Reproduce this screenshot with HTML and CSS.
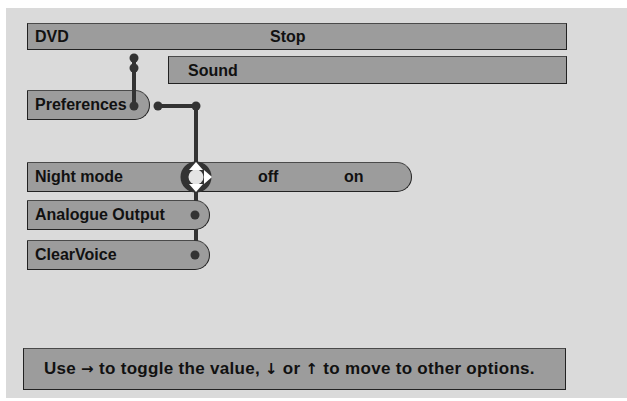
FILE: index.html
```html
<!DOCTYPE html>
<html>
<head>
<meta charset="utf-8">
<title>Preferences - Sound</title>
<link rel="stylesheet" href="styles.css">
</head>
<body>
<div id="osd">
	<div class="bar bar-top">
		<span class="label-dvd">DVD</span>
		<span>Stop</span>
	</div>
	<div class="bar bar-sound">Sound</div>
	<div class="bar bar-round bar-prefs">Preferences</div>

	<div class="bar bar-round bar-night">
		<span class="label-night">Night mode</span>
		<span class="opt-off">off</span>
		<span>on</span>
	</div>
	<div class="bar bar-round bar-item">Analogue Output</div>
	<div class="bar bar-round bar-item bar-clear">ClearVoice</div>

	<div class="bar bar-help">Use <span class="arrow">&rarr;</span> to toggle the value, <span class="arrow">&darr;</span> or <span class="arrow">&uarr;</span> to move to other options.</div>

	<!-- connector lines drawn over the menu -->
	<svg class="links" width="621" height="390" viewBox="0 0 621 390">
		<g stroke="#333" stroke-width="4" fill="none">
			<line x1="128" y1="50" x2="128" y2="98"/>
			<line x1="150" y1="98" x2="190" y2="98"/>
			<line x1="190" y1="98" x2="190" y2="156"/>
			<line x1="190" y1="183" x2="190" y2="193"/>
			<line x1="190" y1="221" x2="190" y2="233"/>
		</g>
		<g fill="#333">
			<circle cx="128" cy="50" r="4.5"/>
			<circle cx="128" cy="60" r="4.5"/>
			<circle cx="128" cy="98" r="4.5"/>
			<circle cx="152" cy="98" r="4.5"/>
			<circle cx="190" cy="98" r="4.5"/>
			<circle cx="189" cy="207" r="4.5"/>
			<circle cx="189" cy="247" r="4.5"/>
			<circle cx="190" cy="169" r="15.5"/>
		</g>
		<circle cx="190" cy="169" r="7.5" fill="#e4e4e4"/>
		<g fill="#fff">
			<polygon points="183,162 197,162 190,154"/>
			<polygon points="183,176 197,176 190,184"/>
			<polygon points="198,162 198,176 206,169"/>
		</g>
	</svg>
</div>
</body>
</html>
```

FILE: styles.css
```css
*{
	margin: 0;
	padding: 0;
	box-sizing: border-box;
}
body{
	background: #fff;
	font-family: "Liberation Sans", Arial, sans-serif;
	font-weight: bold;
	font-size: 16px;
	color: #111;
}
#osd{
	background: #dadada;
	position: relative;
	margin: 8px 0 0 6px;
	width: 621px;
	height: 390px;
	padding: 15px 0 0 21px;
}
.bar{
	background: #9c9c9c;
	border: 1px solid #222;
	border-top-color: #4a4a4a;
	height: 30px;
	line-height: 28px;
	padding-left: 7px;
	white-space: nowrap;
	display: flex;
}
.bar-round{
	border-radius: 0 15px 15px 0;
}
.bar-top{
	width: 540px;
	height: 27px;
	line-height: 26px;
}
.label-dvd{
	width: 235px;
}
.bar-sound{
	width: 399px;
	height: 28px;
	line-height: 27px;
	margin: 6px 0 0 141px;
	padding-left: 19px;
}
.bar-prefs{
	width: 123px;
	margin-top: 6px;
}
.bar-night{
	width: 385px;
	margin-top: 42px;
}
.label-night{
	width: 223px;
}
.opt-off{
	width: 86px;
}
.bar-item{
	width: 183px;
	margin-top: 8px;
}
.bar-clear{
	margin-top: 10px;
}
.bar-help{
	display: block;
	width: 543px;
	height: 42px;
	line-height: 40px;
	margin: 78px 0 0 -4px;
	padding-left: 20px;
	font-size: 17px;
	letter-spacing: 0.3px;
}
.arrow{
	font-family: "DejaVu Sans", sans-serif;
	font-size: 15px;
}
.links{
	position: absolute;
	left: 0;
	top: 0;
	pointer-events: none;
}
```
